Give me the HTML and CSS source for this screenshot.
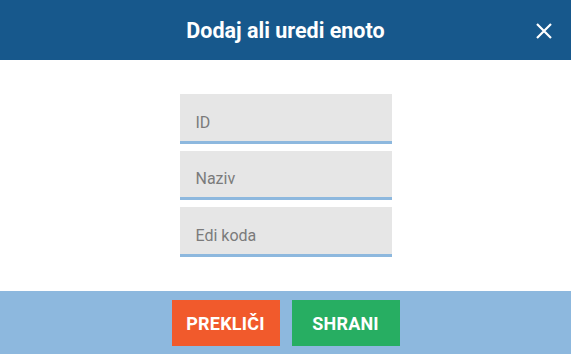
FILE: index.html
```html
<!DOCTYPE html>
<html lang="sl">
<head>
<meta charset="utf-8">
<title>Dodaj ali uredi enoto</title>
<link rel="stylesheet" href="styles.css">
</head>
<body>
<div class="dialog">
  <header class="dialog-header">
    <span class="spacer"></span>
    <h1 class="dialog-title">Dodaj ali uredi enoto</h1>
    <button class="close-btn" aria-label="Zapri">
      <svg width="16" height="16" viewBox="0 0 16 16"><path d="M1 1L15 15M15 1L1 15" stroke="#fff" stroke-width="2.2" fill="none"/></svg>
    </button>
  </header>
  <main class="dialog-body">
    <div class="field"><span class="field-label">ID</span></div>
    <div class="field"><span class="field-label">Naziv</span></div>
    <div class="field"><span class="field-label">Edi koda</span></div>
  </main>
  <footer class="dialog-footer">
    <button class="btn btn-cancel">PREKLIČI</button>
    <button class="btn btn-save">SHRANI</button>
  </footer>
</div>
</body>
</html>
```
FILE: styles.css
```css
html, body {
  margin: 0;
  padding: 0;
  background: #fff;
  font-family: Roboto, "Liberation Sans", sans-serif;
}
.dialog {
  width: 571px;
  height: 354px;
  display: flex;
  flex-direction: column;
}
.dialog-header {
  height: 60px;
  background: #17588c;
  display: grid;
  grid-template-columns: 1fr auto 1fr;
  align-items: center;
}
.dialog-title {
  margin: 0;
  color: #fff;
  font-size: 21.5px;
  font-weight: 700;
  line-height: 24px;
  padding-top: 1px;
}
.close-btn {
  justify-self: end;
  margin-right: 19px;
  background: none;
  border: 0;
  padding: 0;
  width: 16px;
  height: 16px;
  display: flex;
  margin-top: 1px;
}
.dialog-body {
  flex: 1;
  display: flex;
  flex-direction: column;
  align-items: center;
  gap: 7px;
  padding-top: 34px;
}
.field {
  width: 212px;
  height: 46.5px;
  background: #e6e6e6;
  border-bottom: 3px solid #8db8de;
  display: flex;
  align-items: center;
  box-sizing: content-box;
}
.field-label {
  padding-left: 16px;
  padding-top: 10px;
  font-size: 16px;
  color: #7b7b7b;
}
.dialog-footer {
  height: 63px;
  background: #8db8de;
  display: flex;
  justify-content: center;
  align-items: flex-start;
  gap: 12px;
  padding-top: 9px;
  box-sizing: border-box;
}
.btn {
  width: 108px;
  height: 46px;
  border: 0;
  color: #fff;
  font-family: Roboto, "Liberation Sans", sans-serif;
  font-size: 18px;
  font-weight: 700;
  padding: 0;
  padding-top: 1px;
  letter-spacing: 0.2px;
}
.btn-cancel { background: #f15a2c; }
.btn-save { background: #27ae62; }
```
